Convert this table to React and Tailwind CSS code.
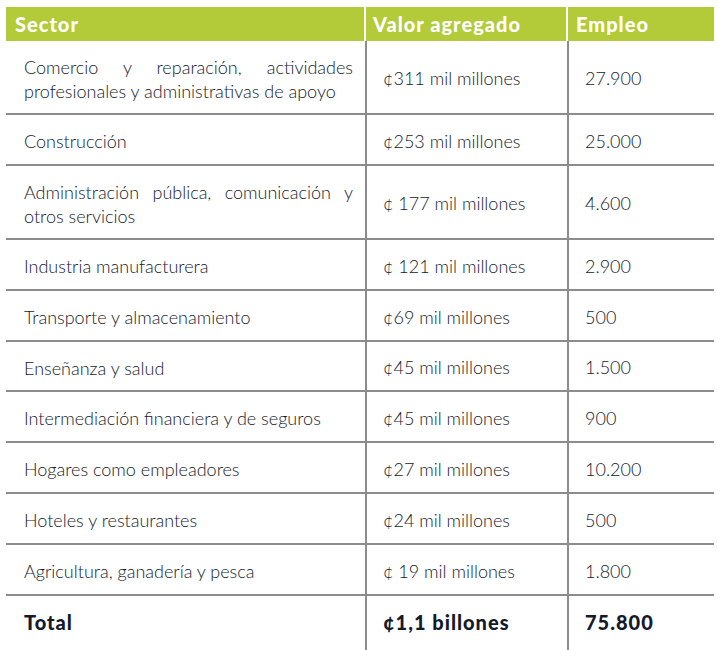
import React from 'react';

const rows = [
  { sector: 'Comercio y reparación, actividades profesionales y administrativas de apoyo', valor: '¢311 mil millones', empleo: '27.900', h: 'h-[74px]' },
  { sector: 'Construcción', valor: '¢253 mil millones', empleo: '25.000', h: 'h-[51px]' },
  { sector: 'Administración pública, comunicación y otros servicios', valor: '¢ 177 mil millones', empleo: '4.600', h: 'h-[74px]' },
  { sector: 'Industria manufacturera', valor: '¢ 121 mil millones', empleo: '2.900', h: 'h-[51px]' },
  { sector: 'Transporte y almacenamiento', valor: '¢69 mil millones', empleo: '500', h: 'h-[51px]' },
  { sector: 'Enseñanza y salud', valor: '¢45 mil millones', empleo: '1.500', h: 'h-[50px]' },
  { sector: 'Intermediación financiera y de seguros', valor: '¢45 mil millones', empleo: '900', h: 'h-[51px]' },
  { sector: 'Hogares como empleadores', valor: '¢27 mil millones', empleo: '10.200', h: 'h-[51px]' },
  { sector: 'Hoteles y restaurantes', valor: '¢24 mil millones', empleo: '500', h: 'h-[51px]' },
  { sector: 'Agricultura, ganadería y pesca', valor: '¢ 19 mil millones', empleo: '1.800', h: 'h-[51px]' },
];

export default function App() {
  return (
    <div className="bg-white w-[717px] h-[650px] overflow-hidden pt-[7px] pl-[6px]" style={{ fontFamily: 'Lato, "Liberation Sans", sans-serif' }}>
      <div className="w-[708px]">
        {/* header */}
        <div className="flex h-[34px] gap-[2px] text-white text-[20px] font-black tracking-[1px]">
          <div className="w-[358px] bg-[#b3cb38] pl-[9px] flex items-center">Sector</div>
          <div className="w-[200px] bg-[#b3cb38] pl-[7px] flex items-center">Valor agregado</div>
          <div className="flex-1 bg-[#b3cb38] pl-[8px] flex items-center">Empleo</div>
        </div>

        {/* body */}
        {rows.map((r, i) => (
          <div key={i} className={`flex ${r.h} border-b-2 border-[#8c8c8c] text-[18px] font-light text-[#141a2b] pt-[3px]`}>
            <div className="w-[359px] pl-[18px] pr-[12px] flex items-center">
              <p className="leading-[24px] text-justify w-full">{r.sector}</p>
            </div>
            <div className="w-[202px] border-l-2 border-[#8c8c8c] pl-[16px] flex items-center -mt-[3px] pt-[3px]">{r.valor}</div>
            <div className="flex-1 border-l-2 border-[#8c8c8c] pl-[16px] flex items-center -mt-[3px] pt-[3px]">{r.empleo}</div>
          </div>
        ))}

        {/* total */}
        <div className="flex h-[60px] text-[20px] font-black tracking-[1px] text-[#141a2b]">
          <div className="w-[359px] pl-[18px] pt-[11px]">Total</div>
          <div className="w-[202px] border-l-2 border-[#8c8c8c] pl-[16px] pt-[11px]">¢1,1 billones</div>
          <div className="flex-1 border-l-2 border-[#8c8c8c] pl-[16px] pt-[11px]">75.800</div>
        </div>
      </div>
    </div>
  );
}
